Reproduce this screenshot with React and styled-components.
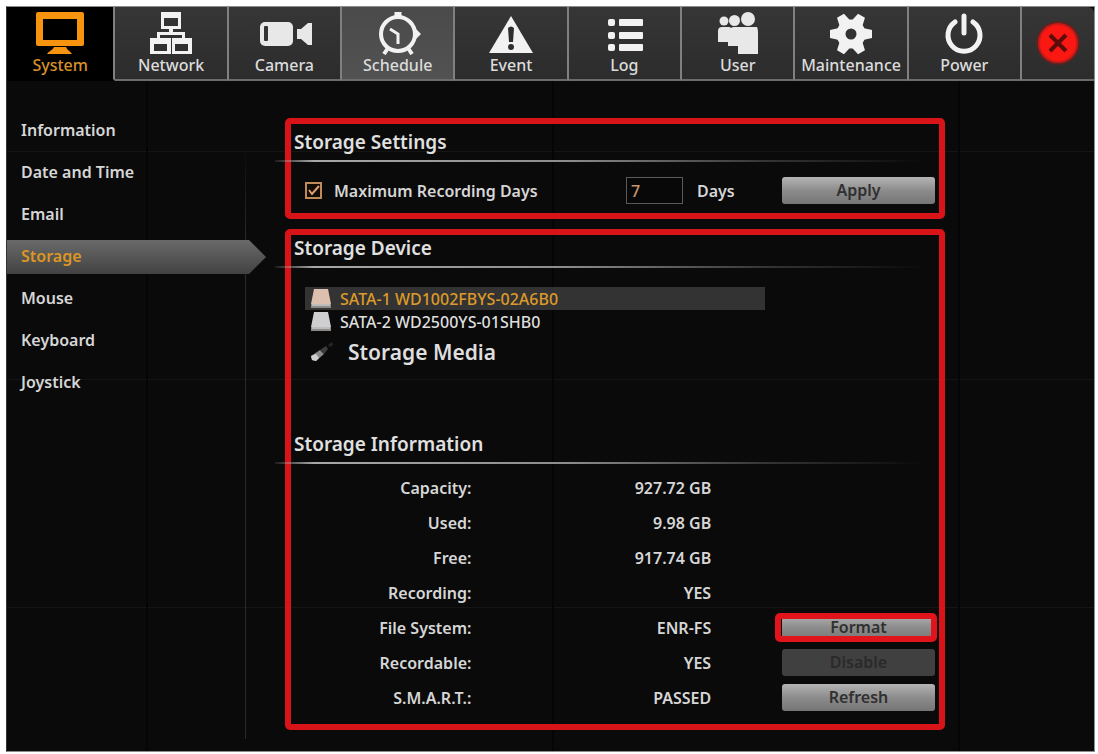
import { useState } from "react";
import styled, { createGlobalStyle, css } from "styled-components";

const GlobalStyle = createGlobalStyle`
  * {
    box-sizing: border-box;
  }

  body {
    margin: 0;
    background: #fff;
    font-family: "Noto Sans", "Open Sans", sans-serif;
    font-size: 16px;
    font-weight: 600;
    line-height: 20px;
    color: #d6d6d6;
  }

  button,
  input {
    font: inherit;
    color: inherit;
  }
`;

const Screen = styled.div`
  display: flex;
  flex-direction: column;
  min-height: calc(100vh - 8px);
  margin: 6px 3px 2px 6px;
  border: 1px solid #8c8c8c;
  border-left-color: #333;
  background-color: #0a0a0a;
  background-image: linear-gradient(90deg, #050505 2px, transparent 2px),
    linear-gradient(#151515 1px, transparent 1px);
  background-size: 406px 228px;
  background-position: 139px 144px;
`;

const TopBar = styled.nav`
  display: flex;
  height: 74px;
`;

const Tab = styled.button`
  flex: 113 1 0;
  min-width: 0;
  display: flex;
  flex-direction: column;
  align-items: center;
  justify-content: flex-end;
  padding: 0 0 4px;
  border: none;
  border-right: 2px solid #808080;
  border-bottom: 2px solid #6c6c6c;
  background: linear-gradient(#363636, #2c2c2c);
  color: #dcdcdc;
  font-weight: 500;
  cursor: pointer;

  ${(props) =>
    props.$hovered &&
    css`
      background: linear-gradient(#4a4a4a, #525252);
    `}

  ${(props) =>
    props.$active &&
    css`
      flex-grow: 108;
      background: #000;
      border-bottom-color: #000;
      color: #d9912b;
    `}

  svg {
    width: 56px;
    height: 44px;
    flex: none;
  }
`;

const CloseTab = styled(Tab)`
  flex-grow: 73;
  justify-content: center;
  padding: 0;
  border-right: none;
  border-top-right-radius: 6px;
`;

const Body = styled.div`
  display: flex;
  flex: 1;
`;

const SideNav = styled.nav`
  display: flex;
  flex-direction: column;
  gap: 8px;
  width: 239px;
  padding-top: 33px;
  padding-bottom: 12px;
  background: linear-gradient(transparent 60px, #2a2a2a 160px) right top / 1px
    calc(100% - 12px) no-repeat;
`;

const SideLink = styled.a`
  height: 34px;
  padding-left: 14px;
  line-height: 32px;
  color: inherit;
  text-decoration: none;

  ${(props) =>
    props.$active &&
    css`
      margin-right: -20px;
      background: linear-gradient(#6a6a6a, #424242);
      clip-path: polygon(
        0 0,
        calc(100% - 17px) 0,
        100% 50%,
        calc(100% - 17px) 100%,
        0 100%
      );
      color: #dd9622;
    `}
`;

const Main = styled.main`
  flex: 1;
  display: flex;
  flex-direction: column;
  gap: 10px;
  padding: 37px 149px 20px 39px;
`;

const Panel = styled.section`
  padding-top: ${(props) => (props.$roomy ? "5px" : "0")};
  padding-bottom: 9px;
  border: 6px solid #d81418;
  border-radius: 5px;
`;

const Heading = styled.h2`
  height: 33px;
  margin: 0 14px 0 -16px;
  padding-left: 19px;
  background: linear-gradient(
      90deg,
      rgba(190, 190, 190, 0.1),
      #a8a8a8 6%,
      #8c8c8c 45%,
      rgba(120, 120, 120, 0.4) 75%,
      transparent
    )
    left bottom / 100% 2px no-repeat;
  font-size: 19px;
  font-weight: 600;
  line-height: 26px;
  color: #e0e0e0;
`;

const SettingsRow = styled.div`
  display: flex;
  align-items: center;
  padding: 15px 4px 0 14px;
`;

const CheckLabel = styled.label`
  flex: 1;
  display: flex;
  align-items: center;
  gap: 12px;
`;

const CheckHolder = styled.span`
  position: relative;
  display: flex;

  svg {
    position: absolute;
    inset: 0;
    pointer-events: none;
  }
`;

const CheckBox = styled.input`
  appearance: none;
  width: 17px;
  height: 17px;
  margin: 0;
  border: 2px solid #c08a58;
  background: #120c06;
`;

const DaysInput = styled.input`
  width: 57px;
  height: 27px;
  padding: 0 4px;
  border: 1px solid #5a5a5a;
  background: #080808;
  color: #c9966c;
  font-weight: 500;
`;

const DaysUnit = styled.span`
  width: 99px;
  padding-left: 14px;
`;

const ActionButton = styled.button`
  display: block;
  width: 153px;
  height: 27px;
  padding: 0;
  border: none;
  border-radius: 3px;
  background: linear-gradient(#b4b4b4, #8c8c8c 50%, #757575);
  color: #303030;
  line-height: 25px;
  cursor: pointer;

  &:disabled {
    background: #404040;
    color: #2a2a2a;
    cursor: default;
  }
`;

const Highlight = styled.span`
  position: relative;
  display: block;

  &::after {
    content: "";
    position: absolute;
    inset: -1px -2px -1px -7px;
    border: 6px solid #e0141a;
    border-radius: 5px;
    pointer-events: none;
  }
`;

const DeviceList = styled.ul`
  width: 71%;
  margin: 19px 0 60px 14px;
  padding: 0;
  list-style: none;
`;

const Device = styled.button`
  display: flex;
  align-items: center;
  gap: 8px;
  width: 100%;
  height: 23px;
  padding: 0 0 0 5px;
  border: none;
  background: ${(props) => (props.$selected ? "#333" : "none")};
  color: ${(props) => (props.$selected ? "#dd9a2a" : "#dedede")};
  font-weight: 500;
  cursor: pointer;
`;

const MediaDevice = styled(Device)`
  gap: 14px;
  height: 38px;
  font-size: 21px;
  font-weight: 600;
  line-height: 26px;
`;

const InfoTable = styled.table`
  width: 100%;
  margin-top: 6px;
  border-collapse: collapse;
  table-layout: fixed;
`;

const InfoCell = styled.td`
  width: ${(props) => props.$width};
  height: 35px;
  padding: 0 ${(props) => (props.$action ? "4px" : "1px")} 0 0;
  font-weight: 600;
  text-align: right;

  ${ActionButton} {
    margin-left: auto;
  }

  ${Highlight} {
    width: 153px;
    margin-left: auto;
  }
`;

const icons = {
  System: (
    <g fill="#f7940f">
      <path
        fillRule="evenodd"
        d="M6 1h44a2 2 0 0 1 2 2v30a2 2 0 0 1-2 2H6a2 2 0 0 1-2-2V3a2 2 0 0 1 2-2zm5 7v21h34V8z"
      />
      <path d="M22 36h12c1 3 4 4 6 7H15c2-3 6-4 7-7z" />
    </g>
  ),
  Network: (
    <g fill="#f2f2f2">
      <path
        fillRule="evenodd"
        d="M18 1h20v17H18zM21 7v8h14V7zM7 27h21v16H7zm4 6v7h13v-7zM29 27h20v16H29zm3 6v7h13v-7z"
      />
      <path d="M26 18h4v3h12v6h-3v-3H17v3h-3v-6h12z" />
    </g>
  ),
  Camera: (
    <g fill="#e8e8e8">
      <rect x="4" y="11" width="33" height="24" rx="5" />
      <rect x="8" y="15" width="4" height="15" rx="1" fill="#333" />
      <path d="M41 18h4l7-6h4v22h-4l-7-6h-4z" />
    </g>
  ),
  Schedule: (
    <g fill="none" stroke="#f2f2f2">
      <circle cx="28" cy="23" r="17" strokeWidth="4" />
      <path d="M28 1v4" strokeWidth="7" />
      <path d="M46 18l5 5-5 5z" fill="#f2f2f2" stroke="none" />
      <path d="M18 37l-4 6M38 37l4 6" strokeWidth="4" />
      <path d="M20 18l8 5v10" strokeWidth="3" />
    </g>
  ),
  Event: (
    <g fill="#f2f2f2">
      <path d="M28 5l22 37H6z" />
      <path
        d="M25 17q3-3 6 0l-1 14h-4zM28 33a3 3 0 1 1 0 6 3 3 0 0 1 0-6z"
        fill="#2e2e2e"
      />
    </g>
  ),
  Log: (
    <g fill="#f2f2f2">
      {[8, 21, 33].map((y) => (
        <g key={y}>
          <rect x="12" y={y} width="7" height="7" rx="2" />
          <rect x="23" y={y} width="24" height="7" rx="1" />
        </g>
      ))}
    </g>
  ),
  User: (
    <g fill="#e8e8e8">
      <circle cx="14" cy="10" r="4.5" />
      <circle cx="24.5" cy="9.5" r="5.5" />
      <circle cx="38" cy="8" r="7" />
      <path d="M8 20q0-4 4-4h7q1 0 2 1 1-1 3-1h23q1 2 1 5v22H28v-8H18v-4H8z" />
    </g>
  ),
  Maintenance: (
    <g>
      <circle cx="28" cy="23" r="10" fill="none" stroke="#f2f2f2" strokeWidth="9" />
      <g fill="#f2f2f2">
        {[30, 90, 150, 210, 270, 330].map((angle) => (
          <path
            key={angle}
            d="M22 11l2-9h8l2 9z"
            transform={`rotate(${angle} 28 23)`}
          />
        ))}
      </g>
    </g>
  ),
  Power: (
    <g fill="none" stroke="#f2f2f2" strokeLinecap="round">
      <path d="M19 11a16 16 0 1 0 18 0" strokeWidth="5" />
      <path d="M28 5v17" strokeWidth="5" />
    </g>
  ),
};

const tabs = Object.keys(icons);

const sideItems = [
  "Information",
  "Date and Time",
  "Email",
  "Storage",
  "Mouse",
  "Keyboard",
  "Joystick",
];

const devices = [
  { name: "SATA-1 WD1002FBYS-02A6B0", color: "#dcbfae" },
  { name: "SATA-2 WD2500YS-01SHB0", color: "#cfcfd2" },
];

const info = [
  { label: "Capacity:", value: "927.72 GB" },
  { label: "Used:", value: "9.98 GB" },
  { label: "Free:", value: "917.74 GB" },
  { label: "Recording:", value: "YES" },
  { label: "File System:", value: "ENR-FS", action: "Format", highlight: true },
  { label: "Recordable:", value: "YES", action: "Disable", disabled: true },
  { label: "S.M.A.R.T.:", value: "PASSED", action: "Refresh" },
];

function DiskIcon({ color }) {
  return (
    <svg width="22" height="21" viewBox="0 0 22 21" aria-hidden="true">
      <path d="M4 1h14l3 15H1z" fill={color} />
      <path d="M1 16h20v4H1z" fill="#8d8a88" />
      <path d="M2 17h18" stroke="#eee" />
    </svg>
  );
}

function UsbIcon() {
  return (
    <svg width="24" height="22" viewBox="0 0 24 22" aria-hidden="true">
      <path d="M1 15l9-6 4 4-8 7-4-1z" fill="#8a8a8a" />
      <path d="M1 15l5-2 3 4-3 3-4-1z" fill="#d0d0d0" />
      <path d="M10 9l6-4 2 3-4 5z" fill="#3c3c3c" />
      <path d="M18 4l4-3 1 3-3 2z" fill="#262626" />
    </svg>
  );
}

function CloseIcon() {
  return (
    <svg viewBox="0 0 56 44" aria-hidden="true">
      <circle cx="28" cy="22" r="22" fill="#5e2321" />
      <circle cx="28" cy="22" r="20" fill="#c81a16" />
      <circle cx="28" cy="22" r="18" fill="#fb1712" />
      <path d="M20 14l16 16M36 14L20 30" stroke="#5c0d0b" strokeWidth="4" />
    </svg>
  );
}

function TopNavigation() {
  const [active, setActive] = useState("System");

  return (
    <TopBar>
      {tabs.map((name) => (
        <Tab
          key={name}
          $active={name === active}
          $hovered={name === "Schedule"}
          onClick={() => setActive(name)}
        >
          <svg viewBox="0 0 56 44" aria-hidden="true">
            {icons[name]}
          </svg>
          {name}
        </Tab>
      ))}
      <CloseTab aria-label="Close">
        <CloseIcon />
      </CloseTab>
    </TopBar>
  );
}

function StorageSettings() {
  const [enabled, setEnabled] = useState(true);
  const [days, setDays] = useState("7");

  return (
    <Panel $roomy>
      <Heading>Storage Settings</Heading>
      <SettingsRow>
        <CheckLabel>
          <CheckHolder>
            <CheckBox
              type="checkbox"
              checked={enabled}
              onChange={(e) => setEnabled(e.target.checked)}
            />
            {enabled && (
              <svg width="17" height="17" viewBox="0 0 17 17">
                <path
                  d="M4 8l3 4 7-8"
                  fill="none"
                  stroke="#e0a06a"
                  strokeWidth="2"
                />
              </svg>
            )}
          </CheckHolder>
          Maximum Recording Days
        </CheckLabel>
        <DaysInput
          aria-label="Maximum Recording Days"
          aria-describedby="days-unit"
          value={days}
          onChange={(e) => setDays(e.target.value)}
        />
        <DaysUnit id="days-unit">Days</DaysUnit>
        <ActionButton>Apply</ActionButton>
      </SettingsRow>
    </Panel>
  );
}

function StorageDevice() {
  const [selected, setSelected] = useState(devices[0].name);

  return (
    <Panel>
      <Heading>Storage Device</Heading>
      <DeviceList>
        {devices.map(({ name, color }) => (
          <li key={name}>
            <Device
              $selected={name === selected}
              onClick={() => setSelected(name)}
            >
              <DiskIcon color={color} />
              {name}
            </Device>
          </li>
        ))}
        <li>
          <MediaDevice>
            <UsbIcon />
            Storage Media
          </MediaDevice>
        </li>
      </DeviceList>

      <Heading>Storage Information</Heading>
      <InfoTable>
        <tbody>
          {info.map(({ label, value, action, disabled, highlight }) => {
            const button = action && (
              <ActionButton disabled={disabled}>{action}</ActionButton>
            );
            return (
              <tr key={label}>
                <InfoCell as="th" scope="row" $width="28%">
                  {label}
                </InfoCell>
                <InfoCell $width="37%">{value}</InfoCell>
                <InfoCell $action>
                  {highlight ? <Highlight>{button}</Highlight> : button}
                </InfoCell>
              </tr>
            );
          })}
        </tbody>
      </InfoTable>
    </Panel>
  );
}

function App() {
  return (
    <>
      <GlobalStyle />
      <Screen>
        <TopNavigation />
        <Body>
          <SideNav>
            {sideItems.map((item) => (
              <SideLink key={item} href="#" $active={item === "Storage"}>
                {item}
              </SideLink>
            ))}
          </SideNav>
          <Main>
            <StorageSettings />
            <StorageDevice />
          </Main>
        </Body>
      </Screen>
    </>
  );
}

export default App;
